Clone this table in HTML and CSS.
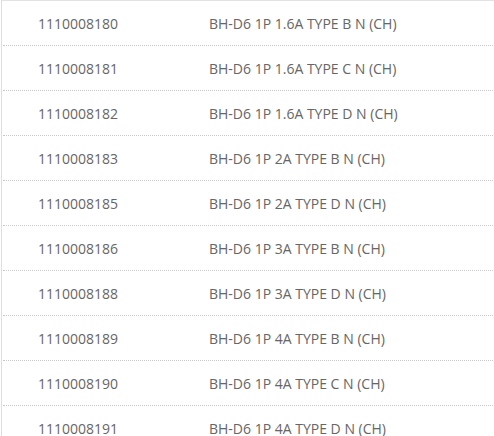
FILE: index.html
```html
<!DOCTYPE html>
<html>
<head>
<meta charset="utf-8">
<link rel="stylesheet" href="styles.css">
</head>
<body>
<div class="list">
  <div class="row"><span class="code">1110008180</span><span class="name">BH-D6 1P 1.6A TYPE B N (CH)</span></div>
  <div class="row"><span class="code">1110008181</span><span class="name">BH-D6 1P 1.6A TYPE C N (CH)</span></div>
  <div class="row"><span class="code">1110008182</span><span class="name">BH-D6 1P 1.6A TYPE D N (CH)</span></div>
  <div class="row"><span class="code">1110008183</span><span class="name">BH-D6 1P 2A TYPE B N (CH)</span></div>
  <div class="row"><span class="code">1110008185</span><span class="name">BH-D6 1P 2A TYPE D N (CH)</span></div>
  <div class="row"><span class="code">1110008186</span><span class="name">BH-D6 1P 3A TYPE B N (CH)</span></div>
  <div class="row"><span class="code">1110008188</span><span class="name">BH-D6 1P 3A TYPE D N (CH)</span></div>
  <div class="row"><span class="code">1110008189</span><span class="name">BH-D6 1P 4A TYPE B N (CH)</span></div>
  <div class="row"><span class="code">1110008190</span><span class="name">BH-D6 1P 4A TYPE C N (CH)</span></div>
  <div class="row"><span class="code">1110008191</span><span class="name">BH-D6 1P 4A TYPE D N (CH)</span></div>
</div>
</body>
</html>
```
FILE: styles.css
```css
html, body {
  margin: 0;
  padding: 0;
  background: #fff;
}
body {
  font-family: "Open Sans", "Liberation Sans", sans-serif;
  font-size: 14px;
  color: #666;
}
.list {
  margin-left: 1px;
  border-left: 1px solid #dedede;
  border-top: 1px solid #e2e2e2;
  padding-left: 1px;
  padding-right: 1px;
}
.row {
  display: flex;
  align-items: center;
  height: 44px;
  border-bottom: 1px dotted #c8c8c8;
}
.code {
  width: 206px;
  padding-left: 35px;
  box-sizing: border-box;
}
.name {
  flex: 1;
}
```
